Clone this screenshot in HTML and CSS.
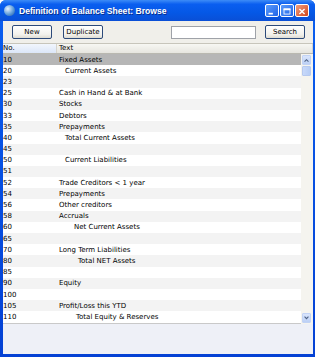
FILE: index.html
```html
<!DOCTYPE html>
<html lang="en">
<head>
    <meta charset="UTF-8">
    <title>Definition of Balance Sheet: Browse</title>
    <link rel="stylesheet" href="styles.css">
</head>
<body>
    <div class="window">
        <div class="titlebar">
            <span class="app-icon"></span>
            <span class="title">Definition of Balance Sheet: Browse</span>
            <div class="win-buttons">
                <span class="win-btn"><svg width="14" height="13" viewBox="0 0 14 13"><rect x="3" y="8" width="5" height="2" fill="#fff"/></svg></span>
                <span class="win-btn"><svg width="14" height="13" viewBox="0 0 14 13"><rect x="3.5" y="3.5" width="7" height="6" fill="none" stroke="#fff"/><rect x="3" y="3" width="8" height="2" fill="#fff"/></svg></span>
                <span class="win-btn close"><svg width="14" height="13" viewBox="0 0 14 13"><path d="M4 3.5l6 6M10 3.5l-6 6" stroke="#fff" stroke-width="1.6"/></svg></span>
            </div>
        </div>

        <div class="toolbar">
            <button class="btn btn-new">New</button>
            <button class="btn btn-dup">Duplicate</button>
            <input class="search-input" type="text">
            <button class="btn btn-search">Search</button>
        </div>

        <div class="list">
            <div class="list-header">
                <div class="head-cell head-no">No.</div>
                <div class="head-cell">Text</div>
            </div>
            <div class="list-body">
                <div class="rows">
                    <div class="row selected"><span class="c-no">10</span><span class="c-text">Fixed Assets</span></div>
                    <div class="row"><span class="c-no">20</span><span class="c-text i1">Current Assets</span></div>
                    <div class="row"><span class="c-no">23</span><span class="c-text"></span></div>
                    <div class="row"><span class="c-no">25</span><span class="c-text">Cash in Hand &amp; at Bank</span></div>
                    <div class="row"><span class="c-no">30</span><span class="c-text">Stocks</span></div>
                    <div class="row"><span class="c-no">33</span><span class="c-text">Debtors</span></div>
                    <div class="row"><span class="c-no">35</span><span class="c-text">Prepayments</span></div>
                    <div class="row"><span class="c-no">40</span><span class="c-text i1">Total Current Assets</span></div>
                    <div class="row"><span class="c-no">45</span><span class="c-text"></span></div>
                    <div class="row"><span class="c-no">50</span><span class="c-text i1">Current Liabilities</span></div>
                    <div class="row"><span class="c-no">51</span><span class="c-text"></span></div>
                    <div class="row"><span class="c-no">52</span><span class="c-text">Trade Creditors &lt; 1 year</span></div>
                    <div class="row"><span class="c-no">54</span><span class="c-text">Prepayments</span></div>
                    <div class="row"><span class="c-no">56</span><span class="c-text">Other creditors</span></div>
                    <div class="row"><span class="c-no">58</span><span class="c-text">Accruals</span></div>
                    <div class="row"><span class="c-no">60</span><span class="c-text i3">Net Current Assets</span></div>
                    <div class="row"><span class="c-no">65</span><span class="c-text"></span></div>
                    <div class="row"><span class="c-no">70</span><span class="c-text">Long Term Liabilities</span></div>
                    <div class="row"><span class="c-no">80</span><span class="c-text i4">Total NET Assets</span></div>
                    <div class="row"><span class="c-no">85</span><span class="c-text"></span></div>
                    <div class="row"><span class="c-no">90</span><span class="c-text">Equity</span></div>
                    <div class="row"><span class="c-no">100</span><span class="c-text"></span></div>
                    <div class="row"><span class="c-no">105</span><span class="c-text">Profit/Loss this YTD</span></div>
                    <div class="row"><span class="c-no">110</span><span class="c-text i4b">Total Equity &amp; Reserves</span></div>
                </div>
                <div class="scrollbar">
                    <span class="sb-btn"><svg width="9" height="9" viewBox="0 0 9 9"><path d="M2 6l2.5-2.5L7 6" fill="none" stroke="#4d6185" stroke-width="1.4"/></svg></span>
                    <span class="sb-thumb"></span>
                    <span class="sb-track"></span>
                    <span class="sb-btn"><svg width="9" height="9" viewBox="0 0 9 9"><path d="M2 3.5l2.5 2.5L7 3.5" fill="none" stroke="#4d6185" stroke-width="1.4"/></svg></span>
                </div>
            </div>
        </div>

        <div class="blank"></div>
    </div>
</body>
</html>
```

FILE: styles.css
```css
* {
    margin: 0;
    padding: 0;
    box-sizing: border-box;
}

body {
    font-family: 'DejaVu Sans', sans-serif;
    font-size: 7px;
    color: #000;
    background: #fff;
}

.window {
    width: 315px;
    height: 357px;
    display: flex;
    flex-direction: column;
    background: linear-gradient(#0a5ff0, #0441d4);
    padding: 0 2px 3px 3px;
    border-radius: 6px 6px 0 0;
}

.titlebar {
    height: 21px;
    display: flex;
    align-items: center;
    margin: 0 -2px 0 -3px;
    padding: 0 6px 0 4px;
    border-radius: 6px 6px 0 0;
    background: linear-gradient(#3d8cf7 0%, #0a5ef0 20%, #0558e6 60%, #0a4fd6 100%);
}

.app-icon {
    width: 11px;
    height: 11px;
    border-radius: 50%;
    background: radial-gradient(circle at 35% 35%, #e8f3ff, #5d9bd8 55%, #1d4f9a);
    margin-right: 4px;
}

.title {
    font-family: 'Liberation Sans', sans-serif;
    font-weight: bold;
    font-size: 8.6px;
    color: #fff;
    text-shadow: 1px 1px 0 #0a2f8c;
    flex: 1;
}

.win-buttons {
    display: flex;
    gap: 1px;
}

.win-btn {
    width: 14px;
    height: 13px;
    display: flex;
    border: 1px solid #fff;
    border-radius: 2px;
    background: linear-gradient(135deg, #5a9cfb, #2164e8);
}

.win-btn.close {
    background: linear-gradient(135deg, #f09e7e, #d2461c);
}

.toolbar {
    height: 22px;
    display: flex;
    align-items: center;
    background: #f0efea;
    padding: 0 6px 0 9px;
}

.btn {
    height: 14px;
    font-family: 'DejaVu Sans', sans-serif;
    font-size: 7px;
    background: linear-gradient(#ffffff, #f2f1ec 70%, #dedcd2);
    border: 1px solid #2c4a7a;
    border-radius: 2px;
    color: #000;
}

.btn-new {
    width: 40px;
}

.btn-dup {
    width: 40px;
    margin-left: 11px;
}

.search-input {
    width: 85px;
    height: 13px;
    margin-left: 68px;
    border: 1px solid #9fa2a8;
    background: #fff;
}

.btn-search {
    width: 40px;
    margin-left: 9px;
}

.list {
    background: #fff;
}

.list-header {
    height: 11px;
    display: grid;
    grid-template-columns: 54px 1fr;
    background: linear-gradient(#f7f7f3, #e6e5df);
    border-top: 1px solid #c7c5bb;
    border-bottom: 1px solid #b9b8b0;
}

.head-cell {
    line-height: 9px;
    padding-left: 2px;
    border-right: 1px solid #d6d4cc;
}

.head-no {
    padding-left: 0;
    background: linear-gradient(#f2f6fd, #dbe6f8);
}

.list-body {
    display: flex;
}

.rows {
    flex: 1;
    border-bottom: 1px solid #c9c9c9;
}

.row {
    height: 11.2px;
    display: grid;
    grid-template-columns: 54px 1fr;
    align-items: center;
}

.row:nth-child(odd) {
    background: #f3f3f3;
}

.row.selected {
    background: #b6b6b6;
}

.c-no {
    padding-left: 0;
}

.c-text {
    padding-left: 2px;
}

.i1 { padding-left: 8px; }
.i3 { padding-left: 17px; }
.i4 { padding-left: 21px; }
.i4b { padding-left: 19px; }

.scrollbar {
    width: 12px;
    display: flex;
    flex-direction: column;
    background: #f5f4ef;
    padding: 1px 2px 1px 1px;
}

.sb-btn {
    width: 9px;
    height: 10px;
    display: flex;
    align-items: center;
    justify-content: center;
    background: linear-gradient(#d9e5fc, #bcd0f5);
    border: 1px solid #c2d3f5;
    border-radius: 1px;
}

.sb-thumb {
    width: 9px;
    height: 10px;
    margin-top: 1px;
    background: linear-gradient(90deg, #c8d9fa, #b7cdf5);
    border: 1px solid #b6c9ef;
    border-radius: 1px;
}

.sb-track {
    flex: 1;
}

.blank {
    flex: 1;
    background: #eef0f7;
}
```
